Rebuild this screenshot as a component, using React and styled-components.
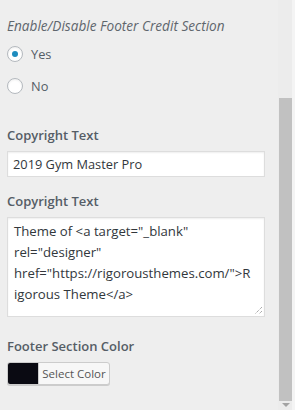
import React from 'react';
import styled, { createGlobalStyle } from 'styled-components';

const GlobalStyle = createGlobalStyle`
  html, body {
    margin: 0;
    padding: 0;
    background: #eeeeee;
    font-family: "Open Sans", "Noto Sans", sans-serif;
    overflow: hidden;
  }
`;

const Frame = styled.div`
  display: flex;
  width: 295px;
  height: 410px;
  background: #eeeeee;
`;

const Panel = styled.div`
  flex: 1;
  padding: 17px 13px 0 7px;
  display: flex;
  flex-direction: column;
`;

const Description = styled.p`
  margin: 0 0 3px;
  font-size: 13.6px;
  font-style: italic;
  color: #5f666d;
  line-height: 18px;
`;

const RadioRow = styled.label`
  display: flex;
  align-items: center;
  gap: 8px;
  height: 32px;
  font-size: 12.8px;
  color: #555d66;
`;

const RadioCircle = styled.span`
  width: 16px;
  height: 16px;
  box-sizing: border-box;
  border-radius: 50%;
  border: 1px solid #b4b9be;
  background: #fff;
  box-shadow: inset 0 1px 2px rgba(0, 0, 0, 0.07);
  display: flex;
  align-items: center;
  justify-content: center;
  &::after {
    content: '';
    width: 6px;
    height: 6px;
    border-radius: 50%;
    background: ${(p) => (p.checked ? '#1e8cbe' : 'transparent')};
  }
`;

const Label = styled.div`
  margin-top: ${(p) => p.top || 0}px;
  font-size: 13px;
  font-weight: 600;
  color: #555d66;
  line-height: 20px;
`;

const TextInput = styled.div`
  margin-top: 6px;
  height: 26px;
  box-sizing: border-box;
  border: 1px solid #ddd;
  background: #fff;
  padding: 0 5px;
  display: flex;
  align-items: center;
  font-size: 12.8px;
  color: #32373c;
  box-shadow: inset 0 1px 2px rgba(0, 0, 0, 0.07);
`;

const TextArea = styled.div`
  position: relative;
  margin-top: 6px;
  height: 100px;
  box-sizing: border-box;
  border: 1px solid #ddd;
  background: #fff;
  padding: 3px 6px;
  font-size: 13.2px;
  color: #32373c;
  white-space: nowrap;
  box-shadow: inset 0 1px 2px rgba(0, 0, 0, 0.07);
`;

const Line = styled.div`
  height: 21px;
  line-height: 21px;
`;

const Grip = styled.svg`
  position: absolute;
  right: 1px;
  bottom: 1px;
`;

const ColorButton = styled.div`
  margin-top: 6px;
  display: flex;
  width: 103px;
  height: 23px;
  box-sizing: border-box;
  border: 1px solid #ccc;
  border-radius: 3px;
  overflow: hidden;
  background: #f7f7f7;
  box-shadow: 0 1px 0 #ccc;
`;

const Swatch = styled.span`
  width: 30px;
  background: ${(p) => p.color};
`;

const ButtonText = styled.span`
  flex: 1;
  display: flex;
  align-items: center;
  justify-content: center;
  border-left: 1px solid #ccc;
  font-size: 11.5px;
  color: #555;
`;

const ScrollTrack = styled.div`
  width: 17px;
  display: flex;
  flex-direction: column;
  align-items: center;
  padding-top: 98px;
  box-sizing: border-box;
  background: linear-gradient(to right, #ececec 0, #ececec 14px, #f4f4f4 14px);
`;

const Thumb = styled.div`
  width: 13px;
  margin-left: -2px;
  height: 303px;
  background: #c1c1c1;
`;

const Arrow = styled.div`
  margin-top: 2px;
  margin-left: -2px;
  width: 0;
  height: 0;
  border-left: 4px solid transparent;
  border-right: 4px solid transparent;
  border-top: 4px solid #a3a3a3;
`;

const creditLines = [
  'Theme of <a target="_blank"',
  'rel="designer"',
  'href="https://rigorousthemes.com/">R',
  'igorous Theme</a>',
];

const App = () => {
  return (
    <>
      <GlobalStyle />
      <Frame>
        <Panel>
          <Description>Enable/Disable Footer Credit Section</Description>
          <RadioRow>
            <RadioCircle checked />
            Yes
          </RadioRow>
          <RadioRow>
            <RadioCircle />
            No
          </RadioRow>
          <Label top={23}>Copyright Text</Label>
          <TextInput>2019 Gym Master Pro</TextInput>
          <Label top={14}>Copyright Text</Label>
          <TextArea>
            {creditLines.map((line, i) => (
              <Line key={i}>{line}</Line>
            ))}
            <Grip width="10" height="10" viewBox="0 0 10 10">
              <path d="M9 2 L2 9 M9 6 L6 9" stroke="#888" strokeWidth="1" strokeDasharray="1 1" />
            </Grip>
          </TextArea>
          <Label top={19}>Footer Section Color</Label>
          <ColorButton>
            <Swatch color="#0a0a12" />
            <ButtonText>Select Color</ButtonText>
          </ColorButton>
        </Panel>
        <ScrollTrack>
          <Thumb />
          <Arrow />
        </ScrollTrack>
      </Frame>
    </>
  );
};

export default App;
